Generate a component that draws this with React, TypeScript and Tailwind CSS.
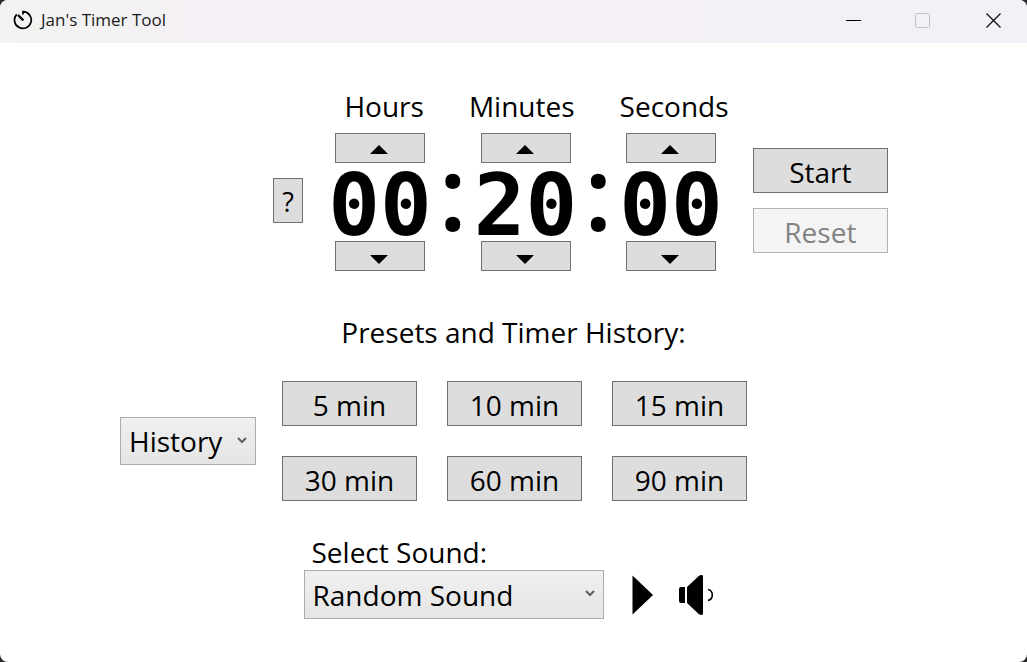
import { useState } from "react";

const buttonBase =
  "flex items-center justify-center border border-[#707070] bg-[#dddddd] hover:bg-[#bee6fd] text-black";

function TimerIcon() {
  return (
    <svg width="20" height="20" viewBox="0 0 20 20" fill="none" stroke="#000" strokeWidth="1.7" aria-hidden="true">
      <path d="M10 4.5V1.6A8.4 8.4 0 1 1 3.7 4.3" />
      <path d="M5 5l5.4 5.4" strokeWidth="2.2" />
    </svg>
  );
}

function TitleBar() {
  return (
    <header className="flex h-[43px] items-center justify-between bg-linear-to-r from-[#f3f3f1] via-[#f4f0f5] via-20% to-[#f4f0f8]">
      <div className="flex items-center gap-2 pb-1 pl-[13px]">
        <TimerIcon />
        <h1 className="text-[17px] leading-6 text-[#1a1a1a]">Jan's Timer Tool</h1>
      </div>
      <div className="flex h-full pb-0.5">
        <button type="button" aria-label="Minimize" className="flex w-[68px] items-center justify-center">
          <svg width="15" height="15" viewBox="0 0 15 15" stroke="#000" aria-hidden="true">
            <path d="M0 7.5h15" />
          </svg>
        </button>
        <button type="button" aria-label="Maximize" disabled className="flex w-[72px] items-center justify-center pr-0.5">
          <svg width="15" height="15" viewBox="0 0 15 15" fill="none" stroke="#c4c0c8" aria-hidden="true">
            <rect x="0.5" y="0.5" width="14" height="14" rx="1" />
          </svg>
        </button>
        <button type="button" aria-label="Close" className="flex w-[68px] items-center justify-center">
          <svg width="15" height="15" viewBox="0 0 15 15" stroke="#111" strokeWidth="1.3" aria-hidden="true">
            <path d="M0.5 0.5l14 14M14.5 0.5l-14 14" />
          </svg>
        </button>
      </div>
    </header>
  );
}

function StepButton({ up, label, onClick }: { up: boolean; label: string; onClick: () => void }) {
  return (
    <button
      type="button"
      aria-label={label}
      onClick={onClick}
      className={`${buttonBase} h-[30px] w-[90px] pr-0.5 ${up ? "pt-0.5" : "pt-1.5"}`}
    >
      <svg width="18" height="9" viewBox="0 0 18 9" aria-hidden="true">
        <path d={up ? "M0 9L9 0L18 9Z" : "M0 0H18L9 9Z"} />
      </svg>
    </button>
  );
}

function Digits({ unit, value, max, onChange }: { unit: string; value: number; max: number; onChange: (n: number) => void }) {
  return (
    <div className="flex flex-col items-center">
      <StepButton up label={`Increase ${unit}`} onClick={() => onChange((value + 1) % max)} />
      <span className="pt-1.5 font-['DejaVu_Sans_Mono',monospace] text-[86px] leading-[72px] font-bold">
        {String(value).padStart(2, "0")}
      </span>
      <StepButton up={false} label={`Decrease ${unit}`} onClick={() => onChange((value + max - 1) % max)} />
    </div>
  );
}

function Colon() {
  return (
    <span className="flex w-[42px] justify-center pb-[22px] font-['Open_Sans',sans-serif] text-[104px] leading-[78px] font-semibold">
      :
    </span>
  );
}

function Select({ id, options, className }: { id: string; options: string[]; className: string }) {
  return (
    <div className={`relative ${className}`}>
      <select
        id={id}
        className="h-full w-full appearance-none border border-[#acacac] bg-linear-to-b from-[#f0f0f0] to-[#e5e5e5] pl-2 text-[28px] text-black"
      >
        {options.map((o) => (
          <option key={o}>{o}</option>
        ))}
      </select>
      <svg
        className="pointer-events-none absolute top-5 right-[9px]"
        width="10"
        height="7"
        viewBox="0 0 10 7"
        fill="none"
        stroke="#606060"
        strokeWidth="2"
        aria-hidden="true"
      >
        <path d="M1 1l4 4l4-4" />
      </svg>
    </div>
  );
}

export default function App() {
  const [hours, setHours] = useState(0);
  const [minutes, setMinutes] = useState(20);
  const [seconds, setSeconds] = useState(0);

  const applyPreset = (total: number) => {
    setHours(Math.floor(total / 60));
    setMinutes(total % 60);
    setSeconds(0);
  };

  return (
    <div className="flex min-h-screen bg-[#2b2b2b] font-['Open_Sans','Noto_Sans',sans-serif]">
      <div className="flex grow flex-col overflow-hidden rounded-lg bg-white">
        <TitleBar />
        <main className="flex grow flex-col items-center pt-[43px] text-[28px] leading-10 text-black">
          <div className="flex gap-[45px] pb-[7px] pl-[46px]">
            <span>Hours</span>
            <span>Minutes</span>
            <span>Seconds</span>
          </div>

          <section aria-label="Timer" className="flex h-[138px] items-center pl-[134px]">
            <button type="button" className={`${buttonBase} mr-[25px] mb-[3px] h-[45px] w-[30px] pt-0.5 text-[27px]`}>
              ?
            </button>
            <Digits unit="hours" value={hours} max={100} onChange={setHours} />
            <Colon />
            <Digits unit="minutes" value={minutes} max={60} onChange={setMinutes} />
            <Colon />
            <Digits unit="seconds" value={seconds} max={60} onChange={setSeconds} />
            <div className="mb-[3px] ml-[30px] flex flex-col gap-[15px]">
              <button type="button" className={`${buttonBase} h-[45px] w-[135px] pt-0.5`}>
                Start
              </button>
              <button
                type="button"
                disabled
                className="flex h-[45px] w-[135px] items-center justify-center border border-[#adb2b5] bg-[#f4f4f4] pt-0.5 text-[#838383]"
              >
                Reset
              </button>
            </div>
          </section>

          <h2 className="pt-[41px] pb-[29px]">Presets and Timer History:</h2>

          <section aria-label="Presets" className="flex items-center gap-[26px] pr-[160px]">
            <label htmlFor="history" className="sr-only">
              Timer history
            </label>
            <Select id="history" options={["History"]} className="h-12 w-[136px]" />
            <div className="grid grid-cols-3 gap-[30px]">
              {[5, 10, 15, 30, 60, 90].map((n) => (
                <button key={n} type="button" onClick={() => applyPreset(n)} className={`${buttonBase} h-[45px] w-[135px] pt-0.5`}>
                  {n} min
                </button>
              ))}
            </div>
          </section>

          <section aria-label="Sound" className="flex items-end pt-[33px] pr-[10px] pb-10">
            <div className="flex flex-col">
              <label htmlFor="sound" className="pl-2 leading-9">
                Select Sound:
              </label>
              <Select id="sound" options={["Random Sound"]} className="h-[49px] w-[300px]" />
            </div>
            <button type="button" aria-label="Play sound" className="mb-1 ml-7">
              <svg width="21" height="40" viewBox="0 0 21 40" aria-hidden="true">
                <path d="M0.5 0.5L21 20L0.5 39.5Z" />
              </svg>
            </button>
            <button type="button" aria-label="Volume" className="mb-1 ml-[26px]">
              <svg width="35" height="40" viewBox="0 0 35 40" aria-hidden="true">
                <path d="M2 12H6V28H2Q0 28 0 26V14Q0 12 2 12Z" />
                <path d="M8 12L20 0.8Q22 -0.5 24 0.5V39.5Q22 40.5 20 39.2L8 28Z" />
                <path d="M29 14.5Q33.3 15.5 33.3 20Q33.3 24.5 29 25.5" fill="none" stroke="#000" strokeWidth="1.6" />
              </svg>
            </button>
          </section>
        </main>
      </div>
    </div>
  );
}
